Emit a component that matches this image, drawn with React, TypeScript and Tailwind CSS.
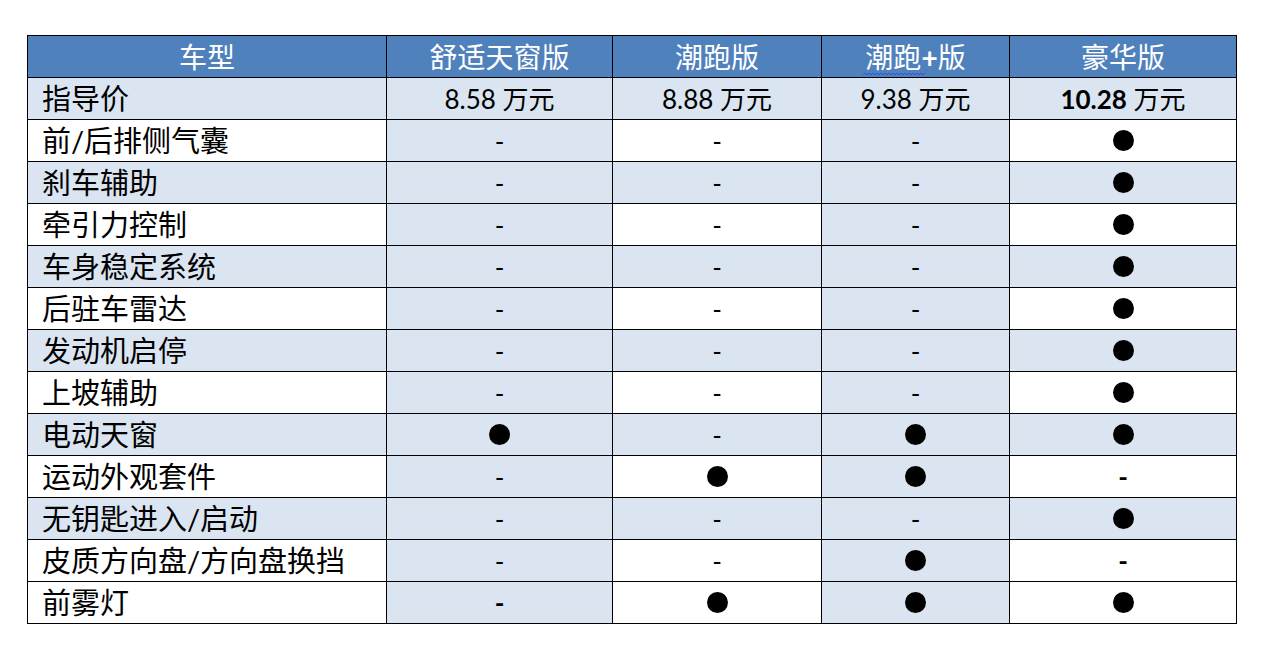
import React from "react";

type Mark = "dot" | "dash" | "bold";

// feature rows: 舒适天窗版, 潮跑版, 潮跑+版, 豪华版
const features: { name: string; marks: Mark[]; shaded: boolean }[] = [
  { name: "前/后排侧气囊", marks: ["dash", "dash", "dash", "dot"], shaded: false },
  { name: "刹车辅助", marks: ["dash", "dash", "dash", "dot"], shaded: true },
  { name: "牵引力控制", marks: ["dash", "dash", "dash", "dot"], shaded: false },
  { name: "车身稳定系统", marks: ["dash", "dash", "dash", "dot"], shaded: true },
  { name: "后驻车雷达", marks: ["dash", "dash", "dash", "dot"], shaded: false },
  { name: "发动机启停", marks: ["dash", "dash", "dash", "dot"], shaded: true },
  { name: "上坡辅助", marks: ["dash", "dash", "dash", "dot"], shaded: false },
  { name: "电动天窗", marks: ["dot", "dash", "dot", "dot"], shaded: true },
  { name: "运动外观套件", marks: ["dash", "dot", "dot", "bold"], shaded: false },
  { name: "无钥匙进入/启动", marks: ["dash", "dash", "dash", "dot"], shaded: true },
  { name: "皮质方向盘/方向盘换挡", marks: ["dash", "dash", "dot", "bold"], shaded: false },
  { name: "前雾灯", marks: ["bold", "dot", "dot", "dot"], shaded: false },
];

const prices = [
  { num: "8.58", bold: false },
  { num: "8.88", bold: false },
  { num: "9.38", bold: false },
  { num: "10.28", bold: true },
];

// columns 舒适天窗版 and 潮跑+版 are always banded
function cellBg(col: number, shaded: boolean) {
  if (shaded || col === 0 || col === 2) return "bg-[#dbe5f1]";
  return "bg-white";
}

function MarkCell({ mark }: { mark: Mark }) {
  if (mark === "dot") {
    return <div className="mx-auto w-[21px] h-[21px] rounded-full bg-black" />;
  }
  return (
    <span className={`inline-block text-[26px] leading-none pt-[3px] ${mark === "bold" ? "font-bold" : ""}`}>-</span>
  );
}

// spell-check squiggle under 潮跑
function Squiggle() {
  return (
    <svg className="absolute -left-[2px] top-full mt-[1px] w-[62px] h-[4px]" viewBox="0 0 62 4" fill="none">
      <path
        d="M0 3 L2 1 L4 3 L6 1 L8 3 L10 1 L12 3 L14 1 L16 3 L18 1 L20 3 L22 1 L24 3 L26 1 L28 3 L30 1 L32 3 L34 1 L36 3 L38 1 L40 3 L42 1 L44 3 L46 1 L48 3 L50 1 L52 3 L54 1 L56 3 L58 1 L60 3 L62 1"
        stroke="#2f54eb"
        strokeWidth="1"
      />
    </svg>
  );
}

export default function App() {
  return (
    <div className="min-h-[655px] bg-white pt-[35px] pl-[27px] font-['Lato','Noto_Sans_CJK_SC',sans-serif] text-black">
      <table className="border-collapse table-fixed w-[1209px]">
        <colgroup>
          <col className="w-[359px]" />
          <col className="w-[226px]" />
          <col className="w-[209px]" />
          <col className="w-[188px]" />
          <col className="w-[227px]" />
        </colgroup>
        <thead>
          <tr className="h-[42px] bg-[#4f81bd] text-white text-[28px] leading-none">
            <th className="border border-black font-normal text-center">车型</th>
            <th className="border border-black font-normal text-center">舒适天窗版</th>
            <th className="border border-black font-normal text-center">潮跑版</th>
            <th className="border border-black font-normal text-center">
              <span className="relative inline-block">
                潮跑
                <Squiggle />
              </span>
              <span className="font-bold">+</span>版
            </th>
            <th className="border border-black font-normal text-center">豪华版</th>
          </tr>
        </thead>
        <tbody>
          <tr className="h-[42px] bg-[#dbe5f1]">
            <td className="border border-black pl-[14px] text-[29px] leading-none">指导价</td>
            {prices.map((p) => (
              <td key={p.num} className="border border-black text-center text-[26px] leading-none">
                <span className={p.bold ? "font-bold" : ""}>{p.num}</span> 万元
              </td>
            ))}
          </tr>
          {features.map((f) => (
            <tr key={f.name} className="h-[42px]">
              <td className={`border border-black pl-[14px] text-[29px] leading-none ${f.shaded ? "bg-[#dbe5f1]" : "bg-white"}`}>
                {f.name}
              </td>
              {f.marks.map((m, i) => (
                <td key={i} className={`border border-black text-center align-middle ${cellBg(i, f.shaded)}`}>
                  <MarkCell mark={m} />
                </td>
              ))}
            </tr>
          ))}
        </tbody>
      </table>
    </div>
  );
}
